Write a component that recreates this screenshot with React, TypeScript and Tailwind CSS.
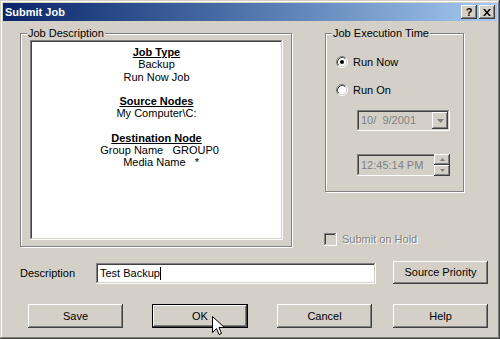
import React from 'react';

const raised =
  'shadow-[inset_-1px_-1px_#404040,inset_1px_1px_#ffffff,inset_-2px_-2px_#808080,inset_2px_2px_#d4d0c8]';
const sunken =
  'shadow-[inset_-1px_-1px_#ffffff,inset_1px_1px_#808080,inset_-2px_-2px_#d4d0c8,inset_2px_2px_#404040]';
const etched = 'border border-[#808080] shadow-[inset_1px_1px_#ffffff,1px_1px_#ffffff]';

const Radio: React.FC<{ checked?: boolean }> = ({ checked }) => (
  <svg width="12" height="12" viewBox="0 0 12 12" className="shrink-0">
    <circle cx="6" cy="6" r="5" fill="#ffffff" />
    <path d="M2.11 9.89 A5.5 5.5 0 0 1 9.89 2.11" stroke="#808080" fill="none" />
    <path d="M9.89 2.11 A5.5 5.5 0 0 1 2.11 9.89" stroke="#ffffff" fill="none" />
    <path d="M2.82 9.18 A4.5 4.5 0 0 1 9.18 2.82" stroke="#404040" fill="none" />
    <path d="M9.18 2.82 A4.5 4.5 0 0 1 2.82 9.18" stroke="#d4d0c8" fill="none" />
    {checked && <circle cx="6" cy="6" r="2" fill="#000000" />}
  </svg>
);

const GroupBox: React.FC<{ label: string; className: string; children: React.ReactNode }> = ({ label, className, children }) => (
  <div className={`relative ${etched} ${className}`}>
    <span className="absolute -top-[7px] left-[6px] bg-[#d4d0c8] px-[1px] leading-[13px]">{label}</span>
    {children}
  </div>
);

const Button: React.FC<{ label: string; w: string; h?: string; isDefault?: boolean }> = ({ label, w, h = 'h-[24px]', isDefault }) => (
  <div
    className={`${w} ${h} flex items-center justify-center bg-[#d4d0c8] ${
      isDefault ? 'border border-black' : ''
    }`}
  >
    <div className={`w-full h-full flex items-center justify-center ${raised}`}>{label}</div>
  </div>
);

const App: React.FC = () => {
  return (
    <div
      className="w-[500px] h-[339px] bg-[#d4d0c8] p-[3px] text-[11px] text-black relative overflow-hidden shadow-[inset_-1px_-1px_#404040,inset_1px_1px_#d4d0c8,inset_-2px_-2px_#808080,inset_2px_2px_#ffffff]"
      style={{ fontFamily: '"Liberation Sans", Arial, sans-serif' }}
    >
      {/* Title bar */}
      <div className="h-[18px] flex items-center justify-between bg-gradient-to-r from-[#0a246a] to-[#a6caf0] pl-[2px] pr-[2px]">
        <span className="text-white font-bold text-[11px] leading-none">Submit Job</span>
        <div className="flex gap-[2px]">
          <div className={`w-[16px] h-[14px] bg-[#d4d0c8] flex items-center justify-center font-bold text-[11px] leading-none ${raised}`}>?</div>
          <div className={`w-[16px] h-[14px] bg-[#d4d0c8] flex items-center justify-center ${raised}`}>
            <svg width="8" height="7" viewBox="0 0 8 7">
              <path d="M0 0h2l2 2.5L6 0h2L5 3.5 8 7H6L4 4.5 2 7H0l3-3.5z" fill="#000" />
            </svg>
          </div>
        </div>
      </div>

      {/* Top section */}
      <div className="flex mt-[12px] ml-[17px] h-[214px]">
        <GroupBox label="Job Description" className="w-[272px] h-[214px] pl-[9px] pt-[6px]">
          <div className={`w-[253px] h-[200px] bg-white pt-[6px] text-center leading-[12.25px] whitespace-pre ${sunken}`}>
            <div className="font-bold underline">Job Type</div>
            <div>Backup</div>
            <div>Run Now Job</div>
            <div>&nbsp;</div>
            <div className="font-bold underline">Source Nodes</div>
            <div>My Computer\C:</div>
            <div>&nbsp;</div>
            <div className="font-bold underline">Destination Node</div>
            <div>{'  Group Name   GROUP0'}</div>
            <div>{'   Media Name   *'}</div>
          </div>
        </GroupBox>

        <div className="flex flex-col ml-[33px]">
          <GroupBox label="Job Execution Time" className="w-[139px] h-[159px] pl-[10px] pt-[22px]">
            <div className="flex items-center gap-[5px] h-[12px]">
              <Radio checked />
              <span>Run Now</span>
            </div>
            <div className="flex items-center gap-[5px] h-[12px] mt-[16px]">
              <Radio />
              <span>Run On</span>
            </div>
            <div className={`ml-[21px] mt-[14px] w-[93px] h-[21px] flex items-center justify-between pl-[4px] pr-[2px] ${sunken}`}>
              <span className="text-[#808080] whitespace-pre">{'10/  9/2001'}</span>
              <div className={`w-[16px] h-[17px] bg-[#d4d0c8] flex items-center justify-center ${raised}`}>
                <svg width="7" height="4" viewBox="0 0 7 4">
                  <path d="M0 0h7L3.5 4z" fill="#808080" />
                </svg>
              </div>
            </div>
            <div className={`ml-[21px] mt-[23px] w-[93px] h-[22px] flex items-center justify-between pl-[4px] ${sunken}`}>
              <span className="text-[#808080]">12:45:14 PM</span>
              <div className="flex flex-col h-[22px] w-[16px]">
                <div className={`h-[11px] bg-[#d4d0c8] flex items-center justify-center ${raised}`}>
                  <svg width="5" height="3" viewBox="0 0 5 3">
                    <path d="M0 3h5L2.5 0z" fill="#808080" />
                  </svg>
                </div>
                <div className={`h-[11px] bg-[#d4d0c8] flex items-center justify-center ${raised}`}>
                  <svg width="5" height="3" viewBox="0 0 5 3">
                    <path d="M0 0h5L2.5 3z" fill="#808080" />
                  </svg>
                </div>
              </div>
            </div>
          </GroupBox>

          <div className="flex items-center gap-[5px] mt-[41px] -ml-[1px] h-[13px] leading-[13px]">
            <div className={`w-[13px] h-[13px] bg-[#d4d0c8] ${sunken}`} />
            <span className="text-[#808080] [text-shadow:1px_1px_0_#ffffff]">Submit on Hold</span>
          </div>
        </div>
      </div>

      {/* Description row */}
      <div className="flex items-start mt-[14px] ml-[17px] h-[23px]">
        <span className="w-[76px] mt-[6px] leading-[13px]">Description</span>
        <div className={`mt-[2px] w-[280px] h-[21px] bg-white flex items-center pl-[4px] ${sunken}`}>
          <span>Test Backup</span>
          <span className="w-[1px] h-[13px] bg-black" />
        </div>
        <div className="ml-[17px]">
          <Button label="Source Priority" w="w-[95px]" h="h-[23px]" />
        </div>
      </div>

      {/* Button row */}
      <div className="flex mt-[20px] ml-[25px]">
        <Button label="Save" w="w-[95px]" />
        <div className="ml-[29px]">
          <Button label="OK" w="w-[96px]" isDefault />
        </div>
        <div className="ml-[29px]">
          <Button label="Cancel" w="w-[95px]" />
        </div>
        <div className="ml-[21px]">
          <Button label="Help" w="w-[95px]" />
        </div>
      </div>

      {/* Mouse pointer over OK */}
      <svg className="absolute left-[212px] top-[316px]" width="13" height="21" viewBox="0 0 13 21">
        <path
          d="M0.5 0.5 L0.5 16.5 L4.5 12.5 L7 18.5 L9.5 17.5 L7 11.5 L12.5 11.5 Z"
          fill="#ffffff"
          stroke="#000000"
          strokeWidth="1"
          strokeLinejoin="miter"
        />
      </svg>
    </div>
  );
};

export default App;
